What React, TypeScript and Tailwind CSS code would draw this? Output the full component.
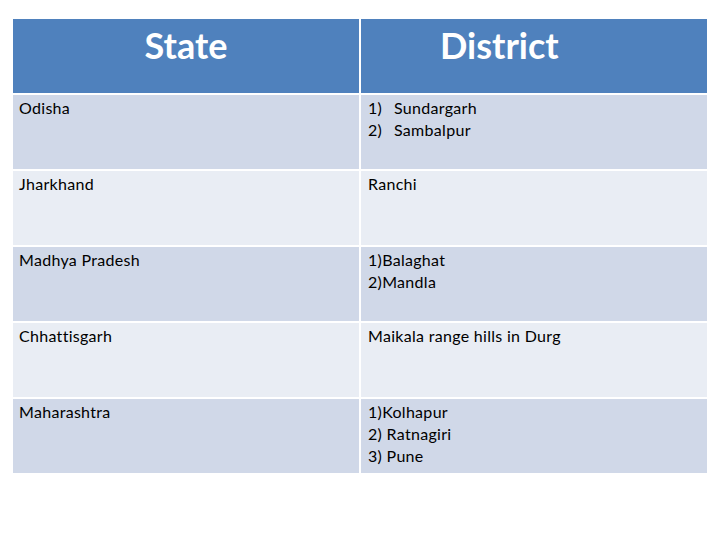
const rows: { state: string; district: React.ReactNode; dark: boolean }[] = [
  {
    state: 'Odisha',
    dark: true,
    district: (
      <>
        <div className="flex"><span className="w-[26px]">1)</span><span>Sundargarh</span></div>
        <div className="flex"><span className="w-[26px]">2)</span><span>Sambalpur</span></div>
      </>
    ),
  },
  { state: 'Jharkhand', dark: false, district: 'Ranchi' },
  {
    state: 'Madhya Pradesh',
    dark: true,
    district: (
      <>
        <div>1)Balaghat</div>
        <div>2)Mandla</div>
      </>
    ),
  },
  { state: 'Chhattisgarh', dark: false, district: 'Maikala range hills in Durg' },
  {
    state: 'Maharashtra',
    dark: true,
    district: (
      <>
        <div>1)Kolhapur</div>
        <div>2) Ratnagiri</div>
        <div>3) Pune</div>
      </>
    ),
  },
]

export default function App() {
  return (
    <div className="w-[720px] h-[540px] bg-white pt-[19px] pl-[13px] font-['Lato','Open_Sans',sans-serif] text-black">
      <div className="w-[694px] grid grid-cols-[346px_346px] gap-[2px]">
        {/* Header */}
        <div className="h-[74px] bg-[#4f81bd] text-white font-bold text-[36px] leading-[44px] pt-[4px] text-center">
          State
        </div>
        <div className="h-[74px] bg-[#4f81bd] text-white font-bold text-[36px] leading-[44px] pt-[4px] pl-[79px]">
          District
        </div>

        {rows.map((r) => (
          <div key={r.state} className="contents">
            <div className={`h-[74px] px-[6px] pt-[2px] text-[16px] tracking-[0.3px] leading-[22px] ${r.dark ? 'bg-[#d0d8e8]' : 'bg-[#e9edf4]'}`}>
              {r.state}
            </div>
            <div className={`h-[74px] px-[7px] pt-[2px] text-[16px] tracking-[0.3px] leading-[22px] ${r.dark ? 'bg-[#d0d8e8]' : 'bg-[#e9edf4]'}`}>
              {r.district}
            </div>
          </div>
        ))}
      </div>
    </div>
  )
}
